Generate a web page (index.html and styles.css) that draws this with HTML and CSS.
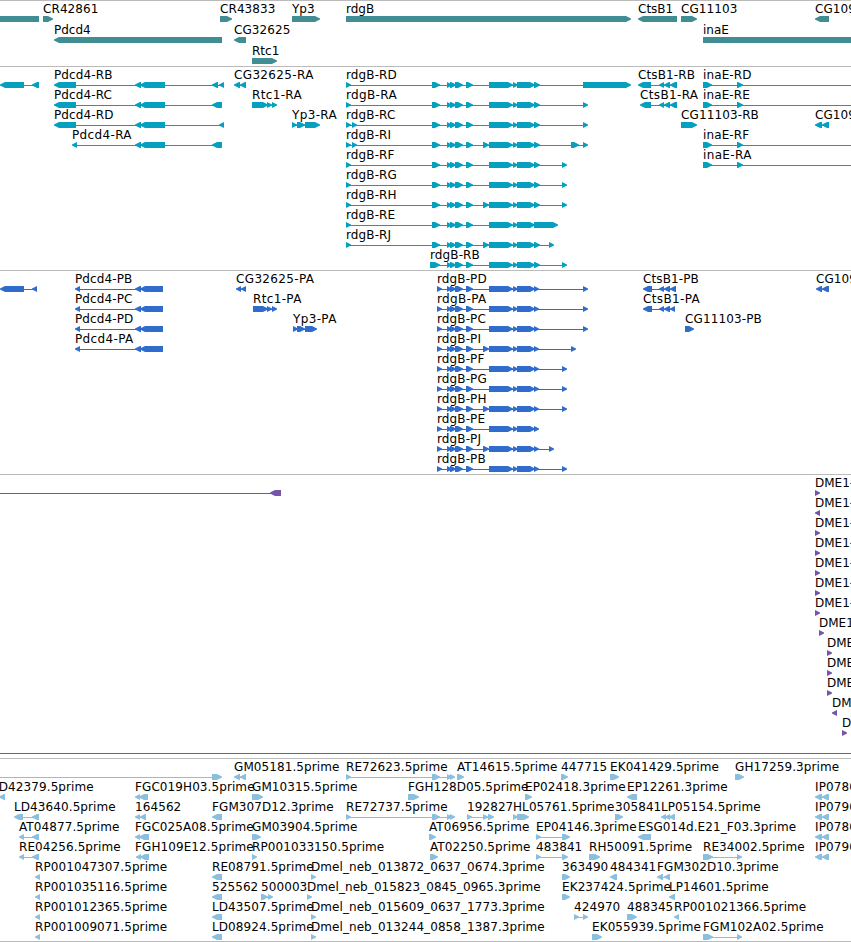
FILE: index.html
```html
<!DOCTYPE html>
<html lang="en">
<head>
<meta charset="UTF-8" />
<title>Genome Browser</title>
<link rel="stylesheet" href="styles.css">
</head>
<body>
<main class="tracks">
<svg class="track genes" id="genes"></svg>
<svg class="track transcripts" id="transcripts"></svg>
<svg class="track proteins" id="proteins"></svg>
<svg class="track probes" id="probes"></svg>
<svg class="track ests" id="ests"></svg>
</main>
<script src="tracks.js"></script>
</body>
</html>
```
FILE: styles.css
```css
* {
box-sizing: border-box;
margin: 0;
padding: 0;
}

body {
background: #fff;
overflow: hidden;
}

.tracks {
display: flex;
flex-direction: column;
width: 851px;
height: 942px;
}

.track {
display: block;
flex: none;
width: 100%;
border-top: 1px solid #bbb;
overflow: hidden;
}

.track text {
font-family: "DejaVu Sans", sans-serif;
font-size: 12px;
fill: #000;
}

.track .accession {
letter-spacing: 0.09px;
}

.track .long {
letter-spacing: 0.07px;
}

.track .isoform {
letter-spacing: 0.12px;
}

.track .isoform-a {
letter-spacing: 0.35px;
}

.genes {
height: 66px;
color: #408d94;
}

.transcripts {
height: 204px;
color: #059fbf;
}

.proteins {
height: 204px;
color: #306ccc;
}

.probes {
height: 284px;
color: #7555a8;
}

.ests {
height: 184px;
color: #8bbfde;
border-bottom: 1px solid #bbb;
}

.glyph,
.intron {
fill: currentColor;
}
```
FILE: tracks.js
```js
const NS = 'http://www.w3.org/2000/svg';

// shared exons of the rdgB gene
const RDGB = '447-452 450-456 455-463 466-473';
const RDGB_END = '489-513 513-518 517-535';

// feature: [row, label, strand, exons, label x if it differs]
const tracks = {
genes: { pitch: 21, features: [
[0, '', '-', '-20-39'],
[0, 'CR42861', '+', '43-53'],
[0, 'CR43833', '+', '220-232'],
[0, 'Yp3', '+', '292-320'],
[0, 'rdgB', '+', '346-631'],
[0, 'CtsB1', '-', '638-677'],
[0, 'CG11103', '+', '681-697'],
[0, 'CG109', '-', '815-829'],
[1, 'Pdcd4', '-', '54-222'],
[1, 'CG32625', '-', '234-246'],
[1, 'inaE', '+', '703-880'],
[2, 'Rtc1', '+', '252-277']
]},
transcripts: { pitch: 20, features: [
[0, '', '-', '0-24 32-39'],
[0, 'Pdcd4-RB', '-', '54-76 135-141 140-165 212-218 219-224'],
[1, 'Pdcd4-RC', '-', '54-76 135-141 140-165 212-222'],
[2, 'Pdcd4-RD', '-', '54-76 135-141 140-165 219-224'],
[3, 'Pdcd4-RA', '-', '72-77 135-141 140-165 212-222'],
[0, 'CG32625-RA', '-', '234-240 240-246'],
[1, 'Rtc1-RA', '+', '252-268 267-272 272-277'],
[2, 'Yp3-RA', '+', '292-297 297-305 305-320'],
[0, 'rdgB-RD', '+', `346-351 432-440 ${RDGB} ${RDGB_END} 534-540 583-631`],
[1, 'rdgB-RA', '+', `346-351 432-440 ${RDGB} ${RDGB_END} 534-540 583-588`],
[2, 'rdgB-RC', '+', `346-351 352-357 432-440 ${RDGB} ${RDGB_END} 534-540 583-588`],
[3, 'rdgB-RI', '+', `346-351 352-357 432-440 ${RDGB} 483-489 ${RDGB_END} 534-540 571-579 583-588`],
[4, 'rdgB-RF', '+', `346-351 432-440 ${RDGB} ${RDGB_END} 534-540 562-567`],
[5, 'rdgB-RG', '+', `346-351 432-440 ${RDGB} ${RDGB_END} 534-540 562-567`],
[6, 'rdgB-RH', '+', `346-351 432-440 ${RDGB} 483-489 ${RDGB_END} 534-540 562-567`],
[7, 'rdgB-RE', '+', `346-351 432-440 ${RDGB} ${RDGB_END} 534-558`],
[8, 'rdgB-RJ', '+', `346-351 432-440 ${RDGB} 483-489 ${RDGB_END} 534-540 549-554`],
[9, 'rdgB-RB', '+', `430-440 ${RDGB} ${RDGB_END} 534-540 562-567`],
[0, 'CtsB1-RB', '-', '638-651 659-664 664-670 670-677'],
[1, 'CtsB1-RA', '-', '640-651 659-664 664-670 670-677'],
[2, 'CG11103-RB', '+', '681-697'],
[0, 'inaE-RD', '+', '703-712 737-743 880-890'],
[1, 'inaE-RE', '+', '703-712 737-743 880-890'],
[3, 'inaE-RF', '+', '703-712 737-743 880-890'],
[4, 'inaE-RA', '+', '703-712 737-743 880-890'],
[2, 'CG109', '-', '815-822 822-829']
]},
proteins: { pitch: 20, features: [
[0, '', '-', '0-24 32-37'],
[0, 'Pdcd4-PB', '-', '75-80 135-141 140-163'],
[1, 'Pdcd4-PC', '-', '75-80 135-141 140-163'],
[2, 'Pdcd4-PD', '-', '75-80 135-141 140-163'],
[3, 'Pdcd4-PA', '-', '75-80 135-141 140-163'],
[0, 'CG32625-PA', '-', '236-241 241-246'],
[1, 'Rtc1-PA', '+', '253-268 267-272 272-277'],
[2, 'Yp3-PA', '+', '293-298 297-305 305-317'],
[0, 'rdgB-PD', '+', `437-442 ${RDGB} ${RDGB_END} 534-539 583-588`],
[1, 'rdgB-PA', '+', `437-442 ${RDGB} ${RDGB_END} 534-539 583-588`],
[2, 'rdgB-PC', '+', `437-442 ${RDGB} ${RDGB_END} 534-539 583-588`],
[3, 'rdgB-PI', '+', `437-442 ${RDGB} 483-489 ${RDGB_END} 534-539 571-576`],
[4, 'rdgB-PF', '+', `437-442 ${RDGB} ${RDGB_END} 534-539 562-567`],
[5, 'rdgB-PG', '+', `437-442 ${RDGB} ${RDGB_END} 534-539 562-567`],
[6, 'rdgB-PH', '+', `437-442 ${RDGB} 483-489 ${RDGB_END} 534-539 562-567`],
[7, 'rdgB-PE', '+', `437-442 ${RDGB} ${RDGB_END} 534-539`],
[8, 'rdgB-PJ', '+', `437-442 ${RDGB} 483-489 ${RDGB_END} 534-539 549-554`],
[9, 'rdgB-PB', '+', `437-442 ${RDGB} ${RDGB_END} 534-539 562-567`],
[0, 'CtsB1-PB', '-', '643-652 659-664 664-670 670-676'],
[1, 'CtsB1-PA', '-', '643-652 659-664 664-670 670-675'],
[2, 'CG11103-PB', '+', '685-694'],
[0, 'CG109', '-', '816-822 822-829']
]},
probes: { pitch: 20, features: [
[0, '', '-', '-20--10 270-281'],
[0, 'DME1-', '+', '815-820'],
[1, 'DME1-', '-', '815-820'],
[2, 'DME1-', '+', '815-820'],
[3, 'DME1-', '+', '815-820'],
[4, 'DME1-', '+', '815-820'],
[5, 'DME1-', '+', '815-820'],
[6, 'DME1-', '+', '815-820'],
[7, 'DME1-', '+', '819-824'],
[8, 'DME1-', '+', '827-832'],
[9, 'DME1-', '+', '827-832'],
[10, 'DME1-', '+', '827-832'],
[11, 'DME1-', '-', '832-837'],
[12, 'DME1-', '+', '842-847'],
[13, '', '+', '-20--10 880-890']
]},
ests: { pitch: 20, features: [
[0, '', '+', '-20--10 212-222'],
[0, 'GM05181.5prime', '-', '234-240 240-246'],
[0, 'RE72623.5prime', '+', '346-351 432-440 447-452 450-455'],
[0, 'AT14615.5prime', '+', '457-464'],
[0, '447715', '+', '561-568'],
[0, 'EK041429.5prime', '+', '610-619'],
[0, 'GH17259.3prime', '+', '735-744'],
[1, 'LD42379.5prime', '-', '-1-5', -8],
[1, 'FGC019H03.5prime', '-', '135-140 139-148'],
[1, 'GM10315.5prime', '+', '252-263'],
[1, 'FGH128D05.5prime', '+', '408-419'],
[1, 'EP02418.3prime', '+', '525-532'],
[1, 'EP12261.3prime', '-', '627-637'],
[1, 'IP0780', '-', '815-822 822-829'],
[2, 'LD43640.5prime', '-', '14-23 32-39'],
[2, '164562', '-', '135-140 140-146'],
[2, 'FGM307D12.3prime', '-', '212-222'],
[2, 'RE72737.5prime', '+', '346-351 432-440 447-452 450-455'],
[2, '192827', '+', '467-472 483-488 488-494'],
[2, 'HL05761.5prime', '+', '513-518 517-529'],
[2, '305841', '+', '615-623'],
[2, 'LP05154.5prime', '-', '661-666 665-670 669-675'],
[2, 'IP0790', '-', '815-822 822-829'],
[3, 'AT04877.5prime', '-', '19-24 32-39'],
[3, 'FGC025A08.5prime', '-', '135-140 139-149'],
[3, 'GM03904.5prime', '+', '252-261'],
[3, 'AT06956.5prime', '+', '429-436'],
[3, 'EP04146.3prime', '+', '536-541 562-570'],
[3, 'ESG014d.E21_F03.3prime', '-', '638-651'],
[3, 'IP0780', '-', '815-822 822-829'],
[4, 'RE04256.5prime', '-', '19-24 32-39'],
[4, 'FGH109E12.5prime', '-', '136-141 140-149', 135],
[4, 'RP001033150.5prime', '+', '252-257'],
[4, 'AT02250.5prime', '+', '430-438'],
[4, '483841', '+', '536-541 562-568'],
[4, 'RH50091.5prime', '+', '589-600'],
[4, 'RE34002.5prime', '+', '703-713 737-742'],
[4, 'IP0790', '-', '815-822 822-829'],
[5, 'RP001047307.5prime', '-', '35-40'],
[5, 'RE08791.5prime', '-', '212-222'],
[5, 'Dmel_neb_013872_0637_0674.3prime', '+', '311-316'],
[5, '363490', '+', '562-570'],
[5, '484341', '-', '610-617'],
[5, 'FGM302D10.3prime', '-', '657-663 664-670'],
[6, 'RP001035116.5prime', '-', '35-40'],
[6, '525562', '-', '212-222'],
[6, '500003', '+', '261-268 268-273'],
[6, 'Dmel_neb_015823_0845_0965.3prime', '+', '307-312'],
[6, 'EK237424.5prime', '+', '562-570'],
[6, 'LP14601.5prime', '-', '669-675'],
[7, 'RP001012365.5prime', '-', '35-40'],
[7, 'LD43507.5prime', '-', '212-222'],
[7, 'Dmel_neb_015609_0637_1773.3prime', '+', '311-316'],
[7, '424970', '+', '574-579 583-588'],
[7, '488345', '+', '627-637'],
[7, 'RP001021366.5prime', '-', '674-679'],
[8, 'RP001009071.5prime', '-', '35-40'],
[8, 'LD08924.5prime', '-', '212-222'],
[8, 'Dmel_neb_013244_0858_1387.3prime', '+', '311-316'],
[8, 'EK055939.5prime', '+', '592-602'],
[8, 'FGM102A02.5prime', '+', '703-713 737-742']
]}
};

function add(svg, name, attrs, text) {
const el = document.createElementNS(NS, name);
for (const key in attrs) el.setAttribute(key, attrs[key]);
if (text) el.textContent = text;
svg.appendChild(el);
}

// 6px high box that narrows to a tip in the strand direction
function arrow(a, b, y, strand) {
const head = Math.min(5, b - a);
if (strand === '-') {
return `${a},${y + 2.5} ${a + head},${y} ${b},${y} ${b},${y + 6} ${a + head},${y + 6} ${a},${y + 3.5}`;
}
return `${a},${y} ${b - head},${y} ${b},${y + 2.5} ${b},${y + 3.5} ${b - head},${y + 6} ${a},${y + 6}`;
}

function labelClass(label) {
if (label.length > 25) return 'long';
if (/-[RP]A$/.test(label)) return 'isoform-a';
if (/-[RP][B-Z]$/.test(label)) return 'isoform';
return /\d{3}/.test(label) ? 'accession' : 'name';
}

for (const id in tracks) {
const svg = document.getElementById(id);
const { pitch, features } = tracks[id];
for (const [row, label, strand, spec, labelX] of features) {
const y = row * pitch + 15;
const exons = spec.split(' ').map(s => s.match(/^(-?\d+)-(-?\d+)$/).slice(1).map(Number));
const start = exons[0][0];
const end = exons[exons.length - 1][1];
if (exons.length > 1) {
// the last probe row is a long match with nothing drawn at its ends
const lineY = id === 'probes' && row === 13 ? 278 : y + 3;
add(svg, 'rect', { class: 'intron', x: start + 2, y: lineY, width: end - start - 4, height: 1 });
}
for (const [a, b] of exons) {
add(svg, 'polygon', { class: 'glyph', points: arrow(a, b, y, strand) });
}
if (label) {
add(svg, 'text', { class: labelClass(label), x: labelX === undefined ? start : labelX, y: y - 3 }, label);
}
}
}
```
